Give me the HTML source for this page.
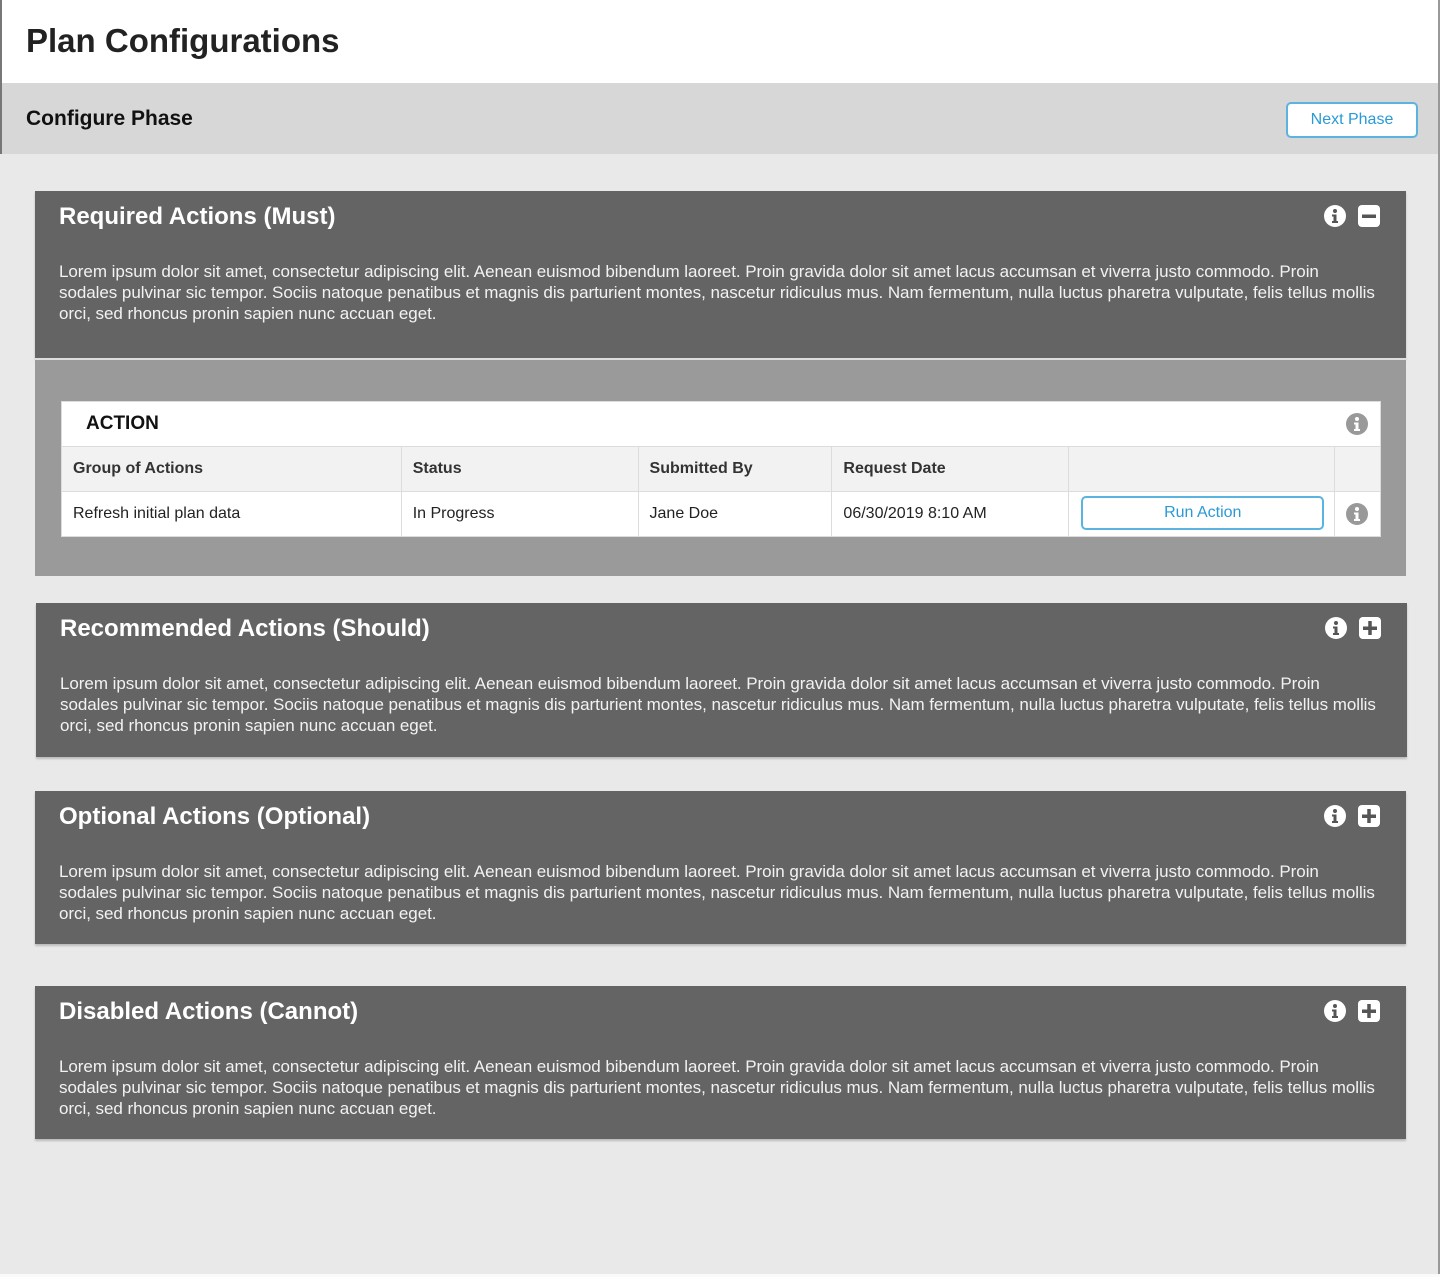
<!DOCTYPE html>
<html><head><meta charset="utf-8"><style>
*{margin:0;padding:0;box-sizing:border-box}
body{width:1440px;height:1277px;background:#e9e9e9;font-family:"Liberation Sans",Arial,sans-serif;position:relative;overflow:hidden}
.abs{position:absolute}
.hdr{left:0;top:0;width:1440px;height:83px;background:#fff;border-left:2px solid #777;border-right:2px solid #999}
.hdr h1{position:absolute;left:24px;top:22px;font-size:33px;font-weight:bold;color:#222}
.bar{left:0;top:83px;width:1440px;height:71px;background:#d7d7d7;border-left:2px solid #777;border-right:2px solid #999}
.bar h2{position:absolute;left:24px;top:24px;font-size:21px;font-weight:bold;color:#111}
.btn{position:absolute;border:2px solid #5ab4e0;border-radius:5px;background:#fff;color:#2a9ad6;font-size:16px;text-align:center}
.rb{right:0;top:154px;width:2px;height:1123px;background:#999}
.bot{left:0;top:1274px;width:1440px;height:3px;background:#fafafa}
.panel{position:absolute;background:#646464;color:#fff;box-shadow:0 2px 2px rgba(0,0,0,.2)}
.panel h3{position:absolute;left:24px;top:12px;font-size:24px;font-weight:bold}
.panel p{position:absolute;left:24px;top:70px;font-size:17px;line-height:21px;color:#f2f2f2;white-space:nowrap;letter-spacing:-0.05px}
.ic{position:absolute;top:14px}
.gray{position:absolute;left:35px;top:358px;width:1371px;height:218px;background:#9a9a9a;border-top:2px solid #ddd}
table{position:absolute;left:61px;top:401px;width:1320px;border-collapse:collapse;background:#fff}
td{border:1px solid #dcdcdc;font-size:16px;color:#222;padding:0 11px;height:45px}
tr.h td{background:#f2f2f2;font-weight:bold;color:#333}
</style></head><body>
<div class="abs hdr"><h1>Plan Configurations</h1></div>
<div class="abs bar"><h2>Configure Phase</h2>
<div class="btn" style="left:1284px;top:19px;width:132px;height:36px;line-height:32px">Next Phase</div></div>
<div class="abs rb"></div>
<div class="abs bot"></div>

<div class="panel" style="left:35px;top:191px;width:1371px;height:167px">
<h3>Required Actions (Must)</h3>
<svg class="ic" style="left:1289px" width="22" height="22" viewBox="0 0 22 22"><circle cx="11" cy="11" r="11" fill="#fff"/><circle cx="11" cy="6" r="2" fill="#555"/><path d="M8 9.5h4.5v6.5h1.5v2h-6v-2h1.5v-4.5h-1.5z" fill="#555"/></svg>
<svg class="ic" style="left:1323px" width="22" height="22" viewBox="0 0 22 22"><rect width="22" height="22" rx="4" fill="#fff"/><rect x="4" y="9.5" width="14" height="3.5" fill="#555"/></svg>
<p>Lorem ipsum dolor sit amet, consectetur adipiscing elit. Aenean euismod bibendum laoreet. Proin gravida dolor sit amet lacus accumsan et viverra justo commodo. Proin<br>sodales pulvinar sic tempor. Sociis natoque penatibus et magnis dis parturient montes, nascetur ridiculus mus. Nam fermentum, nulla luctus pharetra vulputate, felis tellus mollis<br>orci, sed rhoncus pronin sapien nunc accuan eget.</p>
</div>
<div class="gray"></div>
<table>
<tr><td colspan="5" style="background:#fff;font-weight:bold;font-size:19px;color:#111;padding-left:24px;border-right:none">ACTION</td><td style="border-left:none;text-align:center"><svg width="22" height="22" viewBox="0 0 22 22" style="vertical-align:middle"><circle cx="11" cy="11" r="11" fill="#999"/><circle cx="11" cy="6" r="2" fill="#fff"/><path d="M8 9.5h4.5v6.5h1.5v2h-6v-2h1.5v-4.5h-1.5z" fill="#fff"/></svg></td></tr>
<tr class="h"><td style="width:340px">Group of Actions</td><td style="width:237px">Status</td><td style="width:194px">Submitted By</td><td style="width:237px">Request Date</td><td style="width:266px"></td><td style="width:46px"></td></tr>
<tr><td>Refresh initial plan data</td><td>In Progress</td><td>Jane Doe</td><td>06/30/2019 8:10 AM</td><td style="position:relative"><div class="btn" style="left:12px;top:4px;width:243px;height:34px;line-height:30px">Run Action</div></td><td style="text-align:center"><svg width="22" height="22" viewBox="0 0 22 22" style="vertical-align:middle"><circle cx="11" cy="11" r="11" fill="#999"/><circle cx="11" cy="6" r="2" fill="#fff"/><path d="M8 9.5h4.5v6.5h1.5v2h-6v-2h1.5v-4.5h-1.5z" fill="#fff"/></svg></td></tr>
</table>

<div class="panel" style="left:36px;top:603px;width:1371px;height:154px">
<h3>Recommended Actions (Should)</h3>
<svg class="ic" style="left:1289px" width="22" height="22" viewBox="0 0 22 22"><circle cx="11" cy="11" r="11" fill="#fff"/><circle cx="11" cy="6" r="2" fill="#555"/><path d="M8 9.5h4.5v6.5h1.5v2h-6v-2h1.5v-4.5h-1.5z" fill="#555"/></svg>
<svg class="ic" style="left:1323px" width="22" height="22" viewBox="0 0 22 22"><rect width="22" height="22" rx="4" fill="#fff"/><rect x="4" y="9.5" width="14" height="3.5" fill="#555"/><rect x="9.25" y="4" width="3.5" height="14" fill="#555"/></svg>
<p>Lorem ipsum dolor sit amet, consectetur adipiscing elit. Aenean euismod bibendum laoreet. Proin gravida dolor sit amet lacus accumsan et viverra justo commodo. Proin<br>sodales pulvinar sic tempor. Sociis natoque penatibus et magnis dis parturient montes, nascetur ridiculus mus. Nam fermentum, nulla luctus pharetra vulputate, felis tellus mollis<br>orci, sed rhoncus pronin sapien nunc accuan eget.</p>
</div>

<div class="panel" style="left:35px;top:791px;width:1371px;height:153px">
<h3>Optional Actions (Optional)</h3>
<svg class="ic" style="left:1289px" width="22" height="22" viewBox="0 0 22 22"><circle cx="11" cy="11" r="11" fill="#fff"/><circle cx="11" cy="6" r="2" fill="#555"/><path d="M8 9.5h4.5v6.5h1.5v2h-6v-2h1.5v-4.5h-1.5z" fill="#555"/></svg>
<svg class="ic" style="left:1323px" width="22" height="22" viewBox="0 0 22 22"><rect width="22" height="22" rx="4" fill="#fff"/><rect x="4" y="9.5" width="14" height="3.5" fill="#555"/><rect x="9.25" y="4" width="3.5" height="14" fill="#555"/></svg>
<p>Lorem ipsum dolor sit amet, consectetur adipiscing elit. Aenean euismod bibendum laoreet. Proin gravida dolor sit amet lacus accumsan et viverra justo commodo. Proin<br>sodales pulvinar sic tempor. Sociis natoque penatibus et magnis dis parturient montes, nascetur ridiculus mus. Nam fermentum, nulla luctus pharetra vulputate, felis tellus mollis<br>orci, sed rhoncus pronin sapien nunc accuan eget.</p>
</div>

<div class="panel" style="left:35px;top:986px;width:1371px;height:153px">
<h3>Disabled Actions (Cannot)</h3>
<svg class="ic" style="left:1289px" width="22" height="22" viewBox="0 0 22 22"><circle cx="11" cy="11" r="11" fill="#fff"/><circle cx="11" cy="6" r="2" fill="#555"/><path d="M8 9.5h4.5v6.5h1.5v2h-6v-2h1.5v-4.5h-1.5z" fill="#555"/></svg>
<svg class="ic" style="left:1323px" width="22" height="22" viewBox="0 0 22 22"><rect width="22" height="22" rx="4" fill="#fff"/><rect x="4" y="9.5" width="14" height="3.5" fill="#555"/><rect x="9.25" y="4" width="3.5" height="14" fill="#555"/></svg>
<p>Lorem ipsum dolor sit amet, consectetur adipiscing elit. Aenean euismod bibendum laoreet. Proin gravida dolor sit amet lacus accumsan et viverra justo commodo. Proin<br>sodales pulvinar sic tempor. Sociis natoque penatibus et magnis dis parturient montes, nascetur ridiculus mus. Nam fermentum, nulla luctus pharetra vulputate, felis tellus mollis<br>orci, sed rhoncus pronin sapien nunc accuan eget.</p>
</div>
</body></html>
